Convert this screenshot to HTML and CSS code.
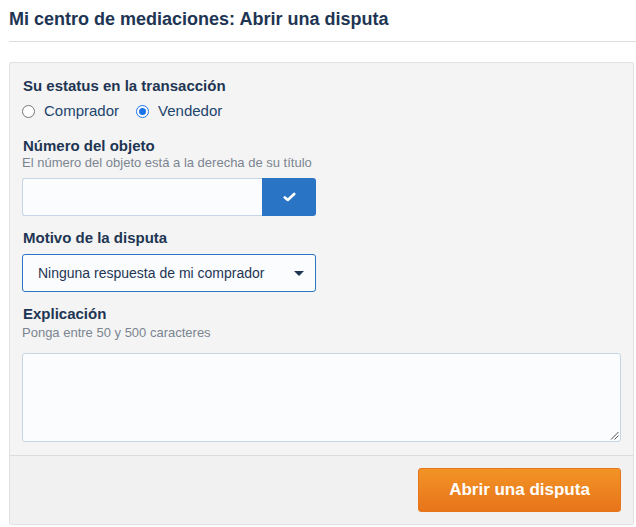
FILE: index.html
```html
<!DOCTYPE html>
<html lang="es">
<head>
<meta charset="utf-8">
<title>Abrir una disputa</title>
<link rel="stylesheet" href="styles.css">
</head>
<body>
<h1 class="page-title">Mi centro de mediaciones: Abrir una disputa</h1>
<form class="panel">
  <div class="panel-body">
    <div class="field">
      <div class="label">Su estatus en la transacción</div>
      <div class="radios">
        <label class="radio"><span class="dot"></span>Comprador</label>
        <label class="radio"><span class="dot checked"></span>Vendedor</label>
      </div>
    </div>
    <div class="field">
      <div class="label">Número del objeto</div>
      <div class="hint">El número del objeto está a la derecha de su título</div>
      <div class="input-group">
        <div class="input"></div>
        <div class="check-btn">
          <svg width="13" height="10" viewBox="0 0 13 10"><path d="M1.8 5.4 L4.8 8 L11.2 2" fill="none" stroke="#fff" stroke-width="2.6" stroke-linecap="round" stroke-linejoin="round"/></svg>
        </div>
      </div>
    </div>
    <div class="field">
      <div class="label">Motivo de la disputa</div>
      <div class="select">
        <span>Ninguna respuesta de mi comprador</span>
        <svg width="10" height="5" viewBox="0 0 10 5"><path d="M0 0 H10 L5 5 Z" fill="#1e3553"/></svg>
      </div>
    </div>
    <div class="field">
      <div class="label">Explicación</div>
      <div class="hint hint-gap">Ponga entre 50 y 500 caracteres</div>
      <div class="textarea">
        <svg class="grip" width="9" height="9" viewBox="0 0 9 9"><path d="M8.5 1 L1 8.5 M8.5 4.5 L4.5 8.5" stroke="#555" stroke-width="1"/></svg>
      </div>
    </div>
  </div>
  <div class="panel-footer">
    <div class="submit">Abrir una disputa</div>
  </div>
</form>
</body>
</html>
```
FILE: styles.css
```css
* { box-sizing: border-box; }
html, body { margin: 0; padding: 0; background: #fff; }
body {
  font-family: "Liberation Sans", Arial, sans-serif;
  color: #1e3553;
  padding: 0 0 0 9px;
  width: 636px;
}
.page-title {
  margin: 0;
  padding: 8px 0 11px 0;
  font-size: 18px;
  line-height: 22px;
  font-weight: bold;
  color: #1e3553;
  border-bottom: 1px solid #dcdcdc;
}
.panel {
  margin: 20px 2px 0 0;
  background: #f4f4f4;
  border: 1px solid #e2e2e2;
  border-radius: 2px;
}
.panel-body {
  padding: 14px 12px 13px 12px;
}
.field { margin-bottom: 13px; }
.field:first-child { margin-bottom: 16px; }
.field:last-child { margin-bottom: 0; }
.label {
  font-size: 15px;
  font-weight: bold;
  line-height: 18px;
  padding-left: 1px;
}
.hint {
  font-size: 13px;
  line-height: 15px;
  color: #7b8591;
}
.hint-gap { margin-top: 2px; }
.radios {
  display: flex;
  gap: 17px;
  margin-top: 6px;
  font-size: 15px;
  line-height: 20px;
  color: #22446d;
}
.radio { display: flex; align-items: center; }
.dot {
  width: 13px; height: 13px;
  border-radius: 50%;
  border: 1px solid #767676;
  background: #fff;
  margin-right: 9px;
  position: relative;
}
.dot.checked { border: 1px solid #1a73e8; }
.dot.checked::after {
  content: "";
  position: absolute;
  left: 2px; top: 2px;
  width: 7px; height: 7px;
  border-radius: 50%;
  background: #1a73e8;
}
.input-group {
  display: flex;
  margin-top: 8px;
  width: 294px;
  height: 38px;
}
.input {
  flex: 1;
  background: #fbfcfe;
  border: 1px solid #c6d6e6;
  border-right: none;
  border-radius: 3px 0 0 3px;
}
.check-btn {
  width: 54px;
  background: #2a74c6;
  border-radius: 0 3px 3px 0;
  display: flex;
  align-items: center;
  justify-content: center;
}
.select {
  margin-top: 7px;
  width: 294px;
  height: 38px;
  border: 1px solid #2a74c6;
  border-radius: 3px;
  background: #fbfcfe;
  display: flex;
  align-items: center;
  justify-content: space-between;
  padding: 0 11px 0 15px;
  font-size: 14px;
  color: #1e3553;
}
.textarea {
  margin-top: 13px;
  height: 89px;
  background: #fbfcfe;
  border: 1px solid #c6d6e6;
  border-radius: 3px;
  position: relative;
}
.grip { position: absolute; right: 1px; bottom: 1px; }
.panel-footer {
  border-top: 1px solid #dcdcdc;
  background: #f1f1f1;
  padding: 12px 12px 12px 12px;
  display: flex;
  justify-content: flex-end;
}
.submit {
  width: 203px;
  height: 44px;
  border-radius: 3px;
  background: linear-gradient(#f29426, #e8741a);
  border: 1px solid #e6761b;
  color: #fff;
  font-weight: bold;
  font-size: 17px;
  display: flex;
  align-items: center;
  justify-content: center;
}
```
